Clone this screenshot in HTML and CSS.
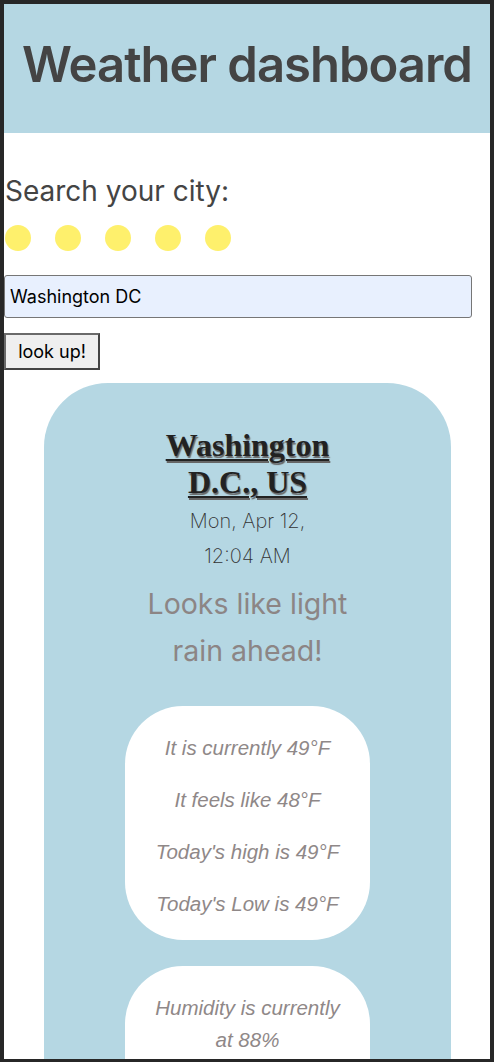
FILE: index.html
```html
<!DOCTYPE html>
<html lang="en">
<head>
<meta charset="utf-8">
<title>Weather dashboard</title>
<link rel="stylesheet" href="styles.css">
</head>
<body>
<div class="frame">
  <header class="top">
    <h1 class="title">Weather dashboard</h1>
  </header>
  <section class="search">
    <h2 class="search-label">Search your city:</h2>
    <div class="dots">
      <span class="dot"></span><span class="dot"></span><span class="dot"></span><span class="dot"></span><span class="dot"></span>
    </div>
    <input class="city-input" type="text" value="Washington DC">
    <button class="lookup" type="button">look up!</button>
  </section>
  <section class="card">
    <h3 class="city">Washington D.C., US</h3>
    <p class="date">Mon, Apr 12, 12:04 AM</p>
    <p class="summary">Looks like light rain ahead!</p>
    <div class="box">
      <p class="stat">It is currently 49°F</p>
      <p class="stat">It feels like 48°F</p>
      <p class="stat">Today's high is 49°F</p>
      <p class="stat">Today's Low is 49°F</p>
    </div>
    <div class="box">
      <p class="stat">Humidity is currently at 88%</p>
      <p class="stat">Wind speed is 5 mph</p>
    </div>
  </section>
</div>
</body>
</html>
```

FILE: styles.css
```css
html, body {
  margin: 0;
  padding: 0;
  height: 100%;
  background: #272727;
}

.frame {
  box-sizing: border-box;
  height: 1062px;
  border: 4px solid #272727;
  border-bottom-width: 3px;
  background: #ffffff;
  overflow: hidden;
  font-family: Inter, "Liberation Sans", sans-serif;
  color: #444444;
}

.top {
  background: #b5d7e3;
  padding: 31px 0 38px;
}

.title {
  margin: 0;
  font-size: 49px;
  line-height: 60px;
  font-weight: 600;
  text-align: center;
  color: #444444;
  letter-spacing: -1px;
}

.search {
  padding: 41px 0 0 0;
}

.search-label {
  margin: 0 0 0 1px;
  font-size: 28px;
  line-height: 34px;
  font-weight: 400;
  color: #444444;
}

.dots {
  display: flex;
  gap: 24px;
  margin: 17px 0 0 1px;
}

.dot {
  width: 26px;
  height: 26px;
  border-radius: 50%;
  background: #fef06c;
}

.city-input {
  display: block;
  box-sizing: border-box;
  width: 468px;
  height: 43px;
  margin: 24px 0 0 0;
  padding: 0 5px;
  border: 1px solid #767676;
  border-radius: 3px;
  background: #e8f0fe;
  font-family: Inter, "Liberation Sans", sans-serif;
  font-size: 18px;
  color: #000000;
}

.lookup {
  display: block;
  box-sizing: border-box;
  width: 96px;
  height: 37px;
  margin: 15px 0 0 0;
  padding: 0;
  border: 2px solid #444444;
  border-top-color: #6a6a6a;
  border-left-color: #6a6a6a;
  background: #efefef;
  font-family: Inter, "Liberation Sans", sans-serif;
  font-size: 18px;
  color: #000000;
}

.card {
  margin: 13px 39px 0 40px;
  padding: 44px 0 40px;
  background: #b5d7e3;
  border-radius: 64px;
  display: flex;
  flex-direction: column;
  align-items: center;
  text-align: center;
}

.city {
  width: 200px;
  margin: 0;
  font-family: "Liberation Serif", serif;
  font-size: 32px;
  line-height: 37px;
  font-weight: 700;
  color: #222222;
  text-decoration: underline;
  text-decoration-thickness: 2px;
  text-underline-offset: 3px;
  text-shadow: 1px 2px 1px #666666;
}

.date {
  width: 150px;
  margin: 3px 0 0;
  font-size: 20px;
  line-height: 35px;
  font-weight: 200;
  color: #333333;
}

.summary {
  width: 220px;
  margin: 6px 0 0;
  font-size: 28.5px;
  line-height: 47px;
  font-weight: 400;
  color: #8c8585;
}

.box {
  box-sizing: border-box;
  width: 245px;
  margin: 32px 0 0;
  padding: 6px 22px 0;
  background: #ffffff;
  border-radius: 58px;
}

.box + .box {
  margin-top: 26px;
}

.stat {
  margin: 20px 0;
  font-family: "Liberation Sans", Arial, sans-serif;
  font-style: italic;
  font-size: 20.5px;
  line-height: 32px;
  color: #8f8888;
}
```
